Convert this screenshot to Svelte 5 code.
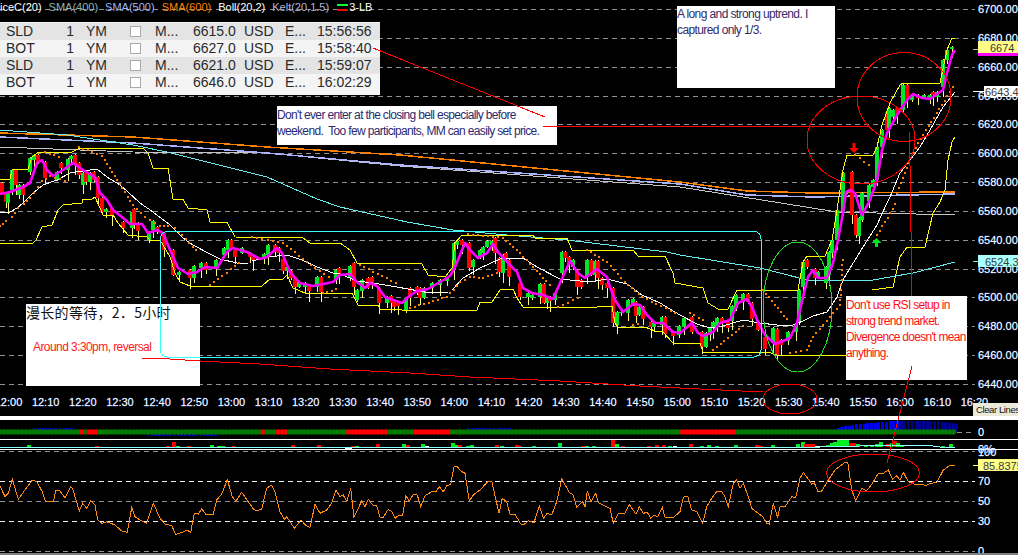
<script>
  const pts = (a) => { let s = []; for (let i = 0; i < a.length; i += 2) s.push(a[i] + ',' + a[i + 1]); return s.join(' '); };
  const zoomed = (ox, oy, a) => a.map((v, i) => +(i % 2 ? oy + v / 3 : ox + v / 3).toFixed(1));
  const sample = (a, step = 5) => {
    const out = [];
    for (let i = 0; i + 3 < a.length; i += 2) {
      const dx = a[i + 2] - a[i], dy = a[i + 3] - a[i + 1], len = Math.hypot(dx, dy), n = Math.max(1, Math.round(len / step));
      for (let k = 0; k < n; k++) out.push([a[i] + (dx * k) / n, a[i + 1] + (dy * k) / n]);
    }
    return out;
  };

  const gridY = [9, 38, 67, 96, 124, 153, 182, 211, 240, 269, 297, 326, 355, 384];
  const prices = ['6700.00','6680.00','6660.00','6640.00','6620.00','6600.00','6580.00','6560.00','6540.00','6520.00','6500.00','6480.00','6460.00','6440.00'];
  const times = ['12:00','12:10','12:20','12:30','12:40','12:50','13:00','13:10','13:20','13:30','13:40','13:50','14:00','14:10','14:20','14:30','14:40','14:50','15:00','15:10','15:20','15:30','15:40','15:50','16:00','16:10','16:20'];

  const sma600 = [0,133,133,137,267,147,400,155,680,182,747,191,813,193,955,192];
  const sma500 = [0,137,133,143,267,153,400,165,680,184,747,195,813,197,955,194];
  const sma400 = [0,147,133,152,267,153,400,166,680,187,762,200,837,212,955,215];
  const smaCyan = [0,130,67,135,133,145,167,152,267,177,317,199,340,207,407,222,453,230,507,235,567,240,667,252,680,255,760,268,780,273,807,280,873,280,913,273,955,262];

  const keltUp = [0,179,10,179,12,170,28,169,32,157,37,153,72,152,80,148,143,148,148,153,153,168,168,168,173,199,183,199,188,208,207,210,210,222,227,222,235,237,303,238,310,243,340,243,350,250,357,263,408,263,422,264,428,275,445,277,452,268,455,243,462,235,533,235,535,238,567,238,572,250,633,250,638,256,665,256,673,273,675,283,703,288,708,303,718,309,728,309,737,290,798,290,803,262,807,256,825,256,832,240,837,210,840,190,843,170,847,155,873,155,877,147,882,125,890,103,900,85,903,83,940,83,947,50,952,38,955,38];
  const keltDn = [36,240,42,227,52,225,58,210,63,205,82,203,83,199,92,199,95,197,100,208,103,215,113,215,118,223,128,235,137,236,147,237,150,240,160,240,163,245,170,257,175,273,180,282,190,286,262,286,270,279,283,279,287,275,293,288,305,293,352,293,358,305,378,305,380,309,402,310,477,310,480,302,492,302,500,290,513,289,517,298,523,307,597,307,598,306,612,306,615,323,618,327,645,327,655,331,663,332,673,343,700,343,703,352,768,352,777,355,846,355];
  const keltDn2 = [872,290,893,287,900,257,907,247,925,247,933,213,940,202,945,190,948,160,952,142,955,137];
  const keltDn0 = [0,243,33,243,36,240];

  const white = [[0,213,10,212,17,208,23,203,33,193,43,185,57,180,70,173,83,171,97,169,107,177,120,185,128,192,140,203,153,212,170,225,183,238,193,245,208,253,220,259,237,263,248,263],[252,261,267,257,287,255,302,260,317,267,333,273,340,274,357,281,373,283,397,287,430,293,448,292],[452,290,463,278,480,268,500,259,523,258,537,267,560,279,590,282,607,279,627,284,642,295,660,303,680,315,697,324,710,328,723,326,743,320,760,323,777,325,793,325,803,321,813,316,827,312,837,297,843,280,852,265,863,247,877,225,887,203,890,197,900,173,910,160,920,147,930,130,943,107,955,92]];

  const magenta = [0,194,10,192,23,187,30,183,37,163,42,160,47,170,53,176,63,170,73,163,83,170,95,177,100,193,107,200,113,210,122,217,130,224,142,224,148,233,157,230,163,233,170,250,178,268,188,274,197,272,205,267,217,268,227,252,233,248,247,252,260,259,267,257,277,248,282,253,290,272,300,283,313,286,333,282,340,275,350,274,357,282,365,288,370,283,377,286,385,297,393,300,402,303,408,297,417,291,428,289,440,282,450,276,455,267,465,243,470,250,478,258,487,253,493,244,498,252,510,265,517,272,523,288,532,293,543,295,553,299,560,283,570,261,578,273,585,278,597,269,607,277,610,287,615,300,623,312,633,304,640,305,647,315,655,323,663,323,673,332,680,333,692,323,698,333,703,336,713,332,720,323,730,320,738,303,747,299,752,307,758,322,765,335,775,344,783,341,790,338,797,323,803,297,808,277,813,270,818,278,827,278,833,263,838,240,843,213,846,192,850,190,855,193,862,215,870,200,877,180,882,150,887,133,897,115,907,100,913,94,922,98,930,99,937,94,943,90,947,73,952,55,955,50];

  const dotSegs = [[0,226,6,221,12,217,18,208,24,204,30,198,34,193,38,187,42,181,50,176,70,182],[45,152,63,158],[79,147,92,152,102,156,112,172,122,188,133,205,145,217,160,226,168,226,175,228,200,254],[210,285,243,260],[252,237,283,243,315,268,333,280],[360,265,400,285],[323,293,340,288],[410,308,447,297,460,282,470,277,483,278,497,273,500,267],[468,234,503,238,520,253,553,288],[558,307,583,296],[587,250,607,262,625,282,642,297,680,315],[633,325,643,322],[690,313,707,322],[713,350,747,323],[763,290,790,323],[790,353,807,350,813,337,840,305,843,255],[855,155,873,168],[877,235,898,200],[897,193,907,168,918,143,950,92,955,82]];
  const dots = dotSegs.flatMap((s) => sample(s));

  // x, top, bottom, green?
  const candles = [
    [2,183,193,0],[6,193,202,0],[8,193,203,1],[12,170,190,1],[16,170,185,0],[19,185,195,1],[23,185,195,0],[30,158,172,1],[34,155,160,1],[38,155,162,0],[45,162,178,0],[57,172,180,1],[61,163,168,0],[68,159,170,1],[71,156,159,1],[75,155,165,0],[79,163,175,0],[83,173,185,1],[86,173,182,0],[90,173,182,1],[94,172,180,0],[98,177,198,0],[102,198,212,0],[106,209,212,1],[112,208,215,0],[123,222,228,0],[132,212,228,1],[134,209,225,0],[138,223,231,0],[149,232,240,1],[153,221,230,1],[157,227,232,0],[164,233,250,0],[173,250,275,0],[179,272,275,1],[190,270,278,0],[194,266,278,1],[201,263,268,1],[206,263,270,0],[216,260,267,1],[224,248,255,1],[228,240,250,1],[231,240,248,0],[235,250,257,0],[242,248,253,1],[250,253,257,0],[253,257,260,0],[264,254,259,1],[268,245,255,1],[275,245,252,0],[279,248,253,0],[283,259,271,0],[287,267,271,1],[291,271,278,0],[295,278,287,0],[299,282,287,1],[305,283,287,1],[309,285,291,0],[317,277,287,1],[321,277,292,0],[336,270,280,1],[339,268,275,0],
    [350,266,278,1],[354,263,287,0],[357,290,300,1],[362,280,291,1],[368,278,288,0],[372,277,283,0],[379,288,303,0],[387,297,303,1],[391,296,303,0],[394,302,307,0],[398,303,306,0],[406,298,310,1],[410,288,298,0],[417,287,293,0],[420,288,298,0],[424,288,298,1],[432,283,288,1],[440,280,285,1],[447,278,281,1],[454,243,270,1],[457,241,245,1],[462,240,245,0],[469,243,268,0],[473,260,267,1],[480,250,257,1],[483,247,253,1],[487,241,247,1],[492,241,245,1],[495,238,253,0],[499,258,272,0],[503,255,273,1],[506,253,258,0],[509,260,277,0],[520,283,297,0],[528,293,297,1],[532,295,298,1],[540,284,297,1],[544,284,303,0],[547,297,303,1],[550,297,301,0],[555,293,300,1],[562,252,273,1],[565,252,258,0],[569,257,264,0],[573,260,267,1],[577,270,287,0],[581,280,287,0],[587,260,277,1],[591,260,275,0],[595,261,275,1],[598,261,278,0],[602,278,285,0],[607,283,288,0],[613,288,323,0],[617,312,325,1],[621,312,313,1],[628,300,313,1],[633,299,304,1],[636,302,316,0],[639,307,315,1],[643,307,319,0],[651,322,327,0],[654,323,327,1],[662,317,325,1],[665,317,334,0],[673,332,336,0],[679,326,335,1],
    [684,318,327,1],[692,317,332,0],[702,332,347,0],[706,333,347,1],[710,328,335,1],[713,322,328,1],[717,318,327,1],[722,318,323,0],[728,322,328,0],[732,306,321,1],[736,295,308,1],[743,294,302,1],[748,294,302,0],[752,303,319,0],[758,323,330,0],[765,337,349,0],[773,328,343,1],[777,329,355,0],[781,340,345,0],[788,332,341,1],[796,324,332,1],[799,290,322,1],[803,262,287,1],[807,260,267,0],[815,269,278,0],[818,272,278,1],[826,267,283,1],[829,252,275,1],[832,240,253,1],[837,210,240,1],[843,173,212,1],[852,172,215,0],[856,215,235,0],[859,218,236,1],[862,193,220,1],[869,185,201,1],[873,180,187,1],[877,147,180,1],[882,130,147,1],[887,112,130,0],[889,108,128,1],[893,110,117,1],[897,108,115,0],[903,85,110,1],[907,85,100,0],[912,95,100,1],[918,95,98,0],[924,95,98,1],[930,95,98,1],[933,92,95,0],[937,92,97,1],[943,60,87,1],[947,50,60,1],[952,47,49,1]
  ];
  const wicks = candles.map((c, i) => [c[0], c[1] - (i * 7) % 7 - 1, c[2] + (i * 5) % 11 + 1]);

  // indicator row
  const redRanges = [[80,83],[88,99],[262,266],[277,287],[348,388],[414,452],[682,737]];
  const dotsRow = [];
  for (let x = 0; x < 957; x += 3.71) dotsRow.push([x, redRanges.some((r) => x >= r[0] && x <= r[1])]);
  const blueTop = (x) => x < 840 ? 431 - (x - 827) * 0.3 : x < 860 ? 427 - (x - 840) * 0.15 : x < 895 ? 424 - (x - 860) * 0.085 : x < 935 ? 421 : 421 + (x - 935) * 0.13;
  const blue = [];
  for (let x = 827; x < 957; x += 3.71) blue.push([x, blueTop(x), x > 900]);
  const blueUp = [];
  for (let x = 33; x < 73; x += 3.71) blueUp.push([x, 428, 432]);
  for (let x = 147; x < 217; x += 3.71) blueUp.push([x, 432, 435.5]);
  for (let x = 467; x < 510; x += 3.71) blueUp.push([x, 428, 432]);

  const G = '#00ee22', R = '#ff0000', W = '#ffffee', Y = '#ffff66';
  const vol = [[29,2,G],[97,1,R],[168,1,R],[174,5,R],[178,1,G],[189,1,R],[212,2,G],[219,1,G],[223,1,G],[234,1,R],[293,2,R],[319,2,R],[353,1,R],[357,1,G],[378,3,R],[404,3,G],[408,2,R],[423,3,G],[427,1,W],[453,4,G],[456,2,G],[460,2,R],[468,1,G],[472,2,G],[497,2,R],[502,1,G],[517,2,R],[520,1,R],[534,1,G],[560,4,G],[583,1,R],[587,1,G],[594,1,G],[613,7,R],[617,3,G],[623,1,R],[649,1,R],[657,2,R],[664,2,R],[670,1,G],[675,1,W],[691,3,R],[702,1,G],[709,2,G],[717,1,G],[736,2,G],[757,2,R],[761,1,R],[773,2,G],[798,3,G],[803,5,G],[806,3,R],[809,3,R],[813,3,R],[817,1,W],[821,1,Y],[828,2,G],[832,4,G],[835,5,G],[839,7,G],[843,7,G],[847,7,G],[851,4,R],[854,4,R],[858,3,G],[866,2,G],[872,2,G],[877,3,G],[881,5,G],[888,3,R],[892,4,G],[895,6,R],[898,4,G],[902,2,G],[935,1,G],[943,1,G],[951,3,G]];

  const rsi = [
    ...zoomed(0,385,[0,303,15,335,25,325,37,282,55,343,75,315,97,285,110,290,127,320,137,350,160,350,168,315,180,318,195,338,212,305,218,312,238,378,248,355,260,370,272,348,285,360,293,405,305,415,320,410,345,420,365,438,382,442,395,368,405,395,420,405,440,415,460,355,480,400,495,417,515,422,527,448,550,441,560,435,572,442,583,385,595,387,605,372,617,387,640,387,650,345,665,327,682,284,697,335,708,348,725,322,745,350,760,372,770,378,785,372,800,310,815,300,825,320,840,380,853,403,860,395,883,430,903,405,918,422,930,427,945,358,960,385,980,375,995,355,1008,315,1020,335,1030,330,1040,350,1052,310,1062,397,1085,348,1095,365,1105,343,1118,360,1130,362,1140,397,1150,397,1165,373,1175,380,1185,400,1195,392,1208,390,1217,332,1228,348,1240,328,1252,330,1262,365,1275,332,1295,320,1308,320,1318,305,1330,320,1340,302,1352,298,1362,245,1372,245,1382,258,1395,265,1408,348,1420,330,1440,315,1465,288,1475,288,1497,385,1507,340,1520,350,1530,388]),
    ...zoomed(510,385,[15,388,33,418,43,418,55,407,72,413,88,362,100,400,112,385,125,390,140,350,155,282,178,322,190,330,200,367,218,350,225,365,232,317,243,350,257,325,265,353,300,370,310,415,325,385,345,385,358,358,378,388,388,365,400,385,412,382,422,400,433,390,443,395,457,367,465,397,490,398,510,380,520,337,533,333,545,375,560,380,578,415,590,365,605,340,620,320,635,320,645,335,655,365,670,295,680,285,690,310,700,295,715,335,725,370,745,385,758,395,770,415,778,417,790,355,803,398,810,365,825,365,845,335,857,338,870,280,880,262,905,297,913,293,923,318,935,318,955,285,975,255,1005,232,1013,232,1025,315,1037,347,1055,310,1070,317,1085,298,1105,265,1120,265,1135,255,1148,283,1160,272,1170,285,1180,262,1195,290,1215,298,1240,298,1247,303,1260,295,1280,293,1300,255,1320,241,1335,241])
  ];
  const redLong = [142,358,170,359,200,361,260,364,330,369,410,373,470,377,560,381,640,386,700,389,763,392];

  const fills = [
    ['SLD','1','YM','M...','6615.0','USD','E...','15:56:56'],
    ['BOT','1','YM','M...','6627.0','USD','E...','15:58:40'],
    ['SLD','1','YM','M...','6621.0','USD','E...','15:59:07'],
    ['BOT','1','YM','M...','6646.0','USD','E...','16:02:29']
  ];
</script>

<div class="screen">
  <svg class="layer" width="1018" height="555" viewBox="0 0 1018 555">
    <!-- grid -->
    {#each gridY as y}
      <line class="grid" x1="0" x2="975" y1={y + 0.5} y2={y + 0.5} />
    {/each}
    {#each [451, 501, 551] as y}
      <line class="grid" x1="0" x2="975" y1={y + 0.5} y2={y + 0.5} />
    {/each}
    {#each [481, 521] as y}
      <line class="grid bright" x1="0" x2="975" y1={y + 0.5} y2={y + 0.5} />
    {/each}

    <!-- moving averages -->
    <polyline class="ln" stroke="#c4c4c4" points={pts(sma400)} />
    <polyline class="ln thick" stroke="#ff8000" points={pts(sma600)} />
    <polyline class="ln thick" stroke="#aab4ff" points={pts(sma500)} />
    <polyline class="ln" stroke="#66eeee" points={pts(smaCyan)} />

    <!-- candles -->
    {#each wicks as w}
      <line class="ln" x1={w[0]} x2={w[0]} y1={w[1]} y2={w[2]} stroke="#ffff88" />
    {/each}
    {#each candles as c}
      <rect class="sharp" x={c[0] - 2} y={c[1]} width="4" height={c[2] - c[1]} fill={c[3] ? '#00e626' : '#ff0000'} />
    {/each}

    <polyline class="ln" stroke="#ffff00" points={pts(keltUp)} />
    <polyline class="ln" stroke="#ffff00" points={pts(keltDn0)} />
    <polyline class="ln" stroke="#ffff00" points={pts(keltDn)} />
    <polyline class="ln" stroke="#ffff00" points={pts(keltDn2)} />
    {#each white as seg}
      <polyline class="ln" stroke="#ffffff" points={pts(seg)} />
    {/each}
    {#each dots as d}
      <rect class="sharp" x={d[0] - 1} y={d[1] - 1} width="2" height="2" fill="#ff8000" />
    {/each}
    <polyline class="mag" stroke="#ff00ff" points={pts(magenta)} />

    <!-- trade arrows -->
    <polygon fill="#ff0000" points="852.5,143 855.5,143 855.5,148 859,148 854,153 849,148 852.5,148" />
    <polygon fill="#00e626" points="875,247 878,247 878,243 881.5,243 876.5,238 871.5,243 875,243" />

    <!-- price axis -->
    {#each gridY as y, i}
      <text class="axis" x="978" y={y + 4}>{prices[i]}</text>
    {/each}
    <line class="ln" x1="973" x2="979" y1="49.5" y2="49.5" stroke="#bbbbbb" />
    <rect x="978" y="41" width="40" height="12.5" fill="#ffff88" />
    <rect x="978" y="53" width="40" height="3" fill="#ff00ff" />
    <text class="tag" x="990" y="52">6674</text>
    <line class="ln" x1="973" x2="984" y1="91.5" y2="91.5" stroke="#ffffff" />
    <rect x="984" y="86" width="34" height="11" fill="#ffffff" />
    <text class="tag" x="985" y="96">6643.4</text>
    <line class="ln" x1="973" x2="978" y1="261.5" y2="261.5" stroke="#66eeee" />
    <rect x="978" y="255" width="40" height="12" fill="#aaffff" />
    <text class="tag" x="985" y="266">6524.3</text>

    <!-- time axis -->
    {#each times as t, i}
      <text class="axis mid" x={8.5 + i * 37.15} y="406">{t}</text>
    {/each}

    <!-- indicator panel -->
    <rect x="0" y="416" width="1018" height="4" fill="#ffffff" />
    {#each blueUp as b}
      <rect class="sharp" x={b[0]} y={b[1]} width="3" height={b[2] - b[1]} fill="#0000a8" />
    {/each}
    {#each blue as b}
      <rect class="sharp" x={b[0] - 1.5} y={b[1]} width="3" height={432 - b[1]} fill={b[2] ? '#000090' : '#0000f0'} />
    {/each}
    {#each dotsRow as d}
      <circle cx={d[0]} cy="432" r="2.7" fill={d[1] ? '#ff0000' : '#007a00'} />
    {/each}
    <line class="grid" x1="957" x2="975" y1="432.5" y2="432.5" />
    <text class="axis" x="978" y="436">0</text>
    <rect x="0" y="439" width="1018" height="1" fill="#ffffff" />

    <!-- volume panel -->
    {#each vol as v}
      <rect class="sharp" x={v[0] - 2} y={447 - v[1]} width="4" height={v[1]} fill={v[2]} />
    {/each}
    <polyline class="ln" stroke="#88ffff" points="0,447.5 345,447.5 352,448 820,447 860,446 900,445.5 930,445.5 940,447 955,447" />
    <line class="ln" x1="345" x2="352" y1="448.5" y2="448.5" stroke="#ffffff" />
    <text class="axis" x="978" y="453">0%</text>
    <rect x="0" y="449" width="1018" height="1" fill="#ffffff" />

    <!-- RSI -->
    <polyline class="ln" stroke="#ff8a14" points={pts(rsi)} />
    <text class="axis" x="978" y="456">100</text>
    <text class="axis" x="978" y="485">70</text>
    <text class="axis" x="978" y="505">50</text>
    <text class="axis" x="978" y="525">30</text>
    <text class="axis" x="978" y="555">0</text>
    <line class="ln" x1="973" x2="978" y1="465.5" y2="465.5" stroke="#ffff88" />
    <rect x="978" y="459" width="40" height="12" fill="#ffff88" />
    <text class="tag" x="983" y="470">85.8375</text>
    <rect x="0" y="553" width="1018" height="2" fill="#808080" />
  </svg>

  <div class="legend">
    <span class="white">iceC(20)</span>
    <span class="s400">SMA(400)</span>
    <span class="s500">SMA(500)</span>
    <span class="s600">SMA(600)</span>
    <span class="white">Boll(20,2)</span>
    <span class="kelt">Kelt(20,1.5)</span>
    <span class="lb"><i class="swatch"></i>3-LB</span>
  </div>

  <div class="fills">
    {#each fills as f}
      <div class="row">
        <span>{f[0]}</span><span class="qty">{f[1]}</span><span class="sym">{f[2]}</span>
        <span class="box"><i></i></span>
        <span>{f[3]}</span><span>{f[4]}</span><span>{f[5]}</span><span>{f[6]}</span><span>{f[7]}</span>
      </div>
    {/each}
  </div>

  <div class="note n1">Don't ever enter at the closing bell especially before<br />weekend.&nbsp; Too few participants, MM can easily set price.</div>
  <div class="note n2">A long and strong uptrend. I<br />captured only 1/3.</div>
  <div class="note n3">Don't use RSI setup in<br />strong trend market.<br />Divergence doesn't mean<br />anything.</div>
  <div class="note n4"><p class="cjk">漫长的等待，2．5小时</p><p class="around">Around 3:30pm, reversal</p></div>

  <button class="clear">Clear Lines</button>

  <svg class="layer" width="1018" height="555" viewBox="0 0 1018 555">
    <rect class="ln" stroke="#33ffff" x="160.5" y="231.5" width="600.5" height="125.5" rx="7" />
    <polyline class="ln" stroke="#ff0000" points={pts(redLong)} />
    <line class="ann" x1="373" y1="48" x2="545" y2="117" />
    <line class="ann" x1="543" y1="126.5" x2="870" y2="126.5" />
    <line class="ann" x1="909.5" y1="132" x2="912" y2="296" />
    <line class="ann" x1="912" y1="366" x2="887" y2="463" />
    <ellipse class="ann" cx="861" cy="140" rx="54" ry="44" />
    <ellipse class="ann" cx="904" cy="97" rx="47" ry="44.5" />
    <ellipse class="ann" cx="790" cy="399" rx="27" ry="15" />
    <ellipse class="ann" cx="873" cy="473" rx="46.5" ry="19" />
    <ellipse class="ln" stroke="#22dd22" cx="797.5" cy="307" rx="34.5" ry="65" />
  </svg>
</div>

<style>
  :global(body) { margin: 0; background: #000; }
  .screen {
    position: relative;
    width: 1018px;
    height: 555px;
    overflow: hidden;
    background: #000;
    font-family: "Liberation Sans", Arial, sans-serif;
  }
  .layer { position: absolute; inset: 0; display: block; pointer-events: none; }
  .grid { stroke: #909090; stroke-dasharray: 5 4; shape-rendering: crispEdges; }
  .bright { stroke: #f4f4f4; }
  .sharp { shape-rendering: crispEdges; }
  .ln { fill: none; stroke-width: 1; shape-rendering: crispEdges; }
  .thick { stroke-width: 1.5; }
  .mag { fill: none; stroke-width: 2.6; stroke-linejoin: round; }
  .ann { fill: none; stroke: #ff0000; stroke-width: 1; shape-rendering: crispEdges; }
  .axis {
    font-family: "Liberation Sans", Arial, sans-serif;
    font-size: 11px;
    fill: #ffffff;
    stroke: #5f8cff;
    stroke-width: 0.35px;
    paint-order: stroke;
  }
  .mid { text-anchor: middle; }
  .tag { font-family: "Liberation Sans", Arial, sans-serif; font-size: 11px; fill: #3a3a3a; }

  .legend {
    position: absolute;
    top: 1px;
    left: 0;
    display: flex;
    gap: 7px;
    height: 13px;
    line-height: 13px;
    font-size: 11px;
    white-space: nowrap;
  }
  .legend .white { color: #fff; }
  .s400 { color: #8fb4b4; }
  .s500 { color: #9db5ff; }
  .s600 { color: #ff8000; }
  .kelt { color: #b4b4d8; }
  .lb { color: #fff; display: flex; align-items: center; margin-left: 1px; }
  .swatch {
    display: block;
    width: 11px;
    height: 7px;
    box-sizing: border-box;
    border-top: 2px solid #00ff33;
    border-bottom: 2px solid #ff0000;
    margin-right: 1px;
  }

  .fills {
    position: absolute;
    top: 22px;
    left: 0;
    width: 380px;
    box-sizing: border-box;
    padding: 1px 0 4px;
    background: #f6f6f6;
    font-size: 14px;
    line-height: 17px;
    color: #2a2a2a;
  }
  .row {
    display: grid;
    grid-template-columns: 56px 12px 56px 25px 38px 51px 41px 32px 1fr;
    padding-left: 6px;
    height: 17px;
    background: #f4f4f4;
  }
  .row:nth-child(odd) { background: #e4e4e4; }
  .qty { text-align: right; }
  .sym { padding-left: 12px; }
  .box { display: flex; align-items: flex-start; padding-top: 3px; }
  .box i { display: block; width: 9px; height: 9px; background: #fff; border: 1px solid #aaa; }

  .note {
    position: absolute;
    box-sizing: border-box;
    background: #fff;
    font-size: 12px;
    line-height: 16px;
    white-space: nowrap;
  }
  .n1 { left: 277px; top: 106px; width: 280px; height: 39px; padding-top: 1px; color: #2a2a70; letter-spacing: -0.66px; }
  .n2 { left: 677px; top: 6px; width: 158px; height: 82px; color: #332a66; letter-spacing: -0.6px; }
  .n3 { left: 846px; top: 296px; width: 121px; height: 84px; padding-top: 1px; color: #ff1010; letter-spacing: -0.7px; }
  .n4 { left: 26px; top: 304px; width: 174px; height: 82px; margin: 0; }
  .n4 p { margin: 0; }
  .cjk { font-family: "Noto Sans CJK SC", "Liberation Sans", sans-serif; font-size: 14px; line-height: 16px; letter-spacing: 0.3px; color: #111; }
  .around { margin-top: 19px !important; padding-left: 7px; color: #ff2020; letter-spacing: -0.57px; }

  .clear {
    position: absolute;
    left: 973px;
    top: 403px;
    width: 50px;
    height: 13px;
    padding: 0 0 0 3px;
    border: 0;
    background: #ece9d8;
    color: #111;
    font-family: "Liberation Sans", Arial, sans-serif;
    font-size: 9.5px;
    line-height: 13px;
    letter-spacing: -0.4px;
    text-align: left;
    white-space: nowrap;
  }
</style>
